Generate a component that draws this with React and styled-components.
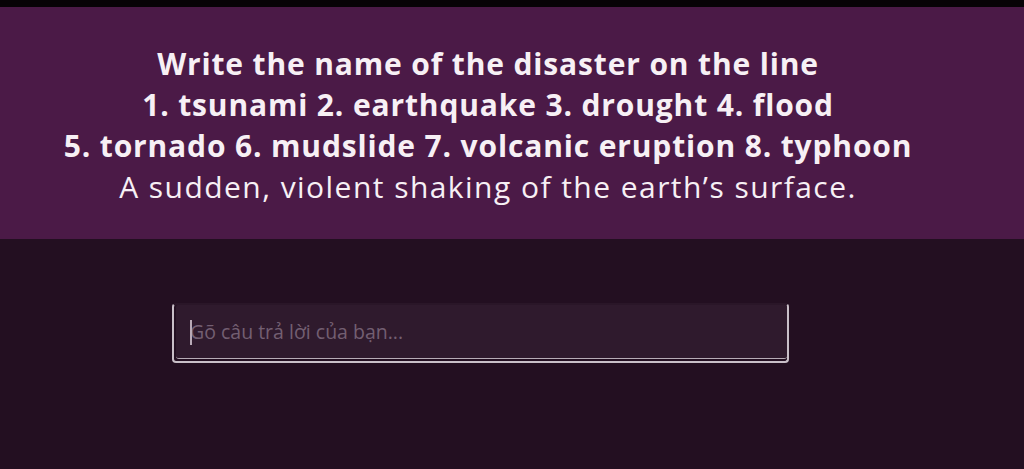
import React from 'react';
import styled, { createGlobalStyle } from 'styled-components';

const GlobalStyle = createGlobalStyle`
  html, body {
    margin: 0;
    padding: 0;
    background: #230f21;
  }
  body {
    font-family: 'Open Sans', 'Noto Sans', sans-serif;
  }
`;

const Page = styled.div`
  min-height: 469px;
  background: #230f21;
  border-top: 7px solid #070306;
`;

const Question = styled.section`
  background: #4b1a47;
  padding: 36px 68px 32px 20px;
  text-align: center;
  color: #f7f0f5;
`;

const Line = styled.div`
  font-size: 30px;
  line-height: 41px;
  font-weight: ${({ bold }) => (bold ? 700 : 500)};
  letter-spacing: ${({ bold }) => (bold ? '0.85px' : '1.45px')};
  white-space: nowrap;
`;

const AnswerArea = styled.div`
  padding: 64px 0 0 172px;
`;

const InputFrame = styled.div`
  position: relative;
  width: 613px;
  height: 54px;
  border: 2px solid #c9bfc8;
  border-top-color: #2a1628;
  border-radius: 4px;
  padding-bottom: 2px;
  box-sizing: content-box;
  display: flex;
  background: #230f21;
`;

const AnswerInput = styled.input`
  flex: 1;
  margin: 0 0 0 2px;
  background: #2f1a2d;
  border: none;
  border-bottom: 1px solid #b7acb6;
  border-radius: 2px 2px 3px 3px;
  padding: 0 0 0 14px;
  font-family: 'Open Sans', 'Noto Sans', sans-serif;
  font-size: 19.5px;
  color: #e8dee6;
  outline: none;
  caret-color: transparent;
  &::placeholder {
    color: #735f72;
  }
`;

const Caret = styled.span`
  position: absolute;
  left: 16px;
  top: 15px;
  width: 2px;
  height: 25px;
  background: #b9aab7;
  pointer-events: none;
`;

export default function App() {
  return (
    <>
      <GlobalStyle />
      <Page>
        <Question>
          <Line bold>Write the name of the disaster on the line</Line>
          <Line bold>1. tsunami 2. earthquake 3. drought 4. flood</Line>
          <Line bold>5. tornado 6. mudslide 7. volcanic eruption 8. typhoon</Line>
          <Line>A sudden, violent shaking of the earth’s surface.</Line>
        </Question>
        <AnswerArea>
          <InputFrame>
            <AnswerInput placeholder="Gõ câu trả lời của bạn..." />
            <Caret />
          </InputFrame>
        </AnswerArea>
      </Page>
    </>
  );
}
